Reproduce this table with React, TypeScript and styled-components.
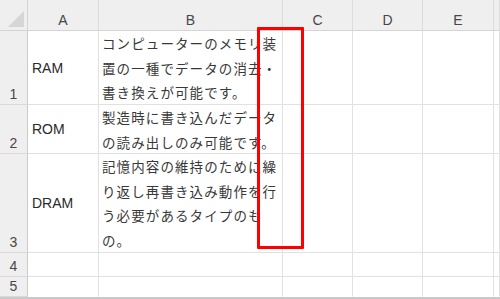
import React from 'react';
import styled, { createGlobalStyle } from 'styled-components';

interface IRow {
  num: number;
  height: number;
  label?: string;
  lines?: string[];
}

const columns = ['A', 'B', 'C', 'D', 'E', ''];

const rows: IRow[] = [
  {
    num: 1,
    height: 74,
    label: 'RAM',
    lines: ['コンピューターのメモリ装', '置の一種でデータの消去・', '書き換えが可能です。'],
  },
  {
    num: 2,
    height: 49,
    label: 'ROM',
    lines: ['製造時に書き込んだデータ', 'の読み出しのみ可能です。'],
  },
  {
    num: 3,
    height: 99,
    label: 'DRAM',
    lines: ['記憶内容の維持のために繰', 'り返し再書き込み動作を行', 'う必要があるタイプのも', 'の。'],
  },
  { num: 4, height: 24 },
  { num: 5, height: 20 },
];

const GlobalStyle = createGlobalStyle`
  html, body {
    margin: 0;
    padding: 0;
    background: #ffffff;
  }
  body {
    font-family: "Liberation Sans", Arial, sans-serif;
    overflow: hidden;
  }
`;

const Wrapper = styled.div`
  position: relative;
  width: 500px;
  height: 299px;
  overflow: hidden;
  border-bottom: 2px solid #c9c9c9;
  box-sizing: border-box;
`;

const Sheet = styled.div<{ $rows: string }>`
  display: grid;
  grid-template-columns: 28px 71px 184px 70px 70px 71px 1fr;
  grid-template-rows: ${(p) => p.$rows};
`;

const Corner = styled.div`
  background: #efefef;
  border-right: 1px solid #d4d4d4;
  border-bottom: 1px solid #d4d4d4;
  box-sizing: border-box;
  display: flex;
  align-items: flex-end;
  justify-content: flex-end;
  padding: 0 2px 2px 0;

  svg {
    display: block;
  }
`;

const ColHead = styled.div`
  background: #efefef;
  border-right: 1px solid #dcdcdc;
  border-bottom: 1px solid #d4d4d4;
  box-sizing: border-box;
  display: flex;
  align-items: center;
  justify-content: center;
  padding-top: 9px;
  font-size: 14px;
  color: #474747;
`;

const RowHead = styled.div`
  background: #efefef;
  border-right: 1px solid #cacaca;
  border-bottom: 1px solid #dadada;
  box-sizing: border-box;
  display: flex;
  align-items: flex-end;
  justify-content: center;
  line-height: 20px;
  font-size: 14px;
  color: #474747;
`;

const Cell = styled.div<{ $last?: boolean }>`
  border-right: 1px solid #e1e1e1;
  border-bottom: 1px solid ${(p) => (p.$last ? '#ffffff' : '#e1e1e1')};
  box-sizing: border-box;
  min-width: 0;
`;

const LabelCell = styled(Cell)`
  display: flex;
  align-items: center;
  padding-left: 4px;
  font-size: 14px;
  color: #2a2a2a;
`;

const TextCell = styled(Cell)`
  padding-left: 3px;
  font-family: "Noto Sans CJK JP", "Noto Sans", sans-serif;
  font-size: 13.5px;
  letter-spacing: 1.1px;
  line-height: 24.5px;
  color: #383838;
  white-space: nowrap;
  overflow: visible;

  span {
    display: block;
  }
`;

const Highlight = styled.div`
  position: absolute;
  left: 257px;
  top: 27px;
  width: 47px;
  height: 222px;
  border: 3px solid #ff0000;
  border-radius: 1px;
  box-sizing: border-box;
  pointer-events: none;
`;

export default function App() {
  const rowTemplate = ['31px', ...rows.map((r) => `${r.height}px`)].join(' ');

  return (
    <>
      <GlobalStyle />
      <Wrapper>
        <Sheet $rows={rowTemplate}>
          <Corner>
            <svg width="17" height="17" viewBox="0 0 17 17">
              <polygon points="0,16 16,16 16,0" fill="#d6d6d6" />
            </svg>
          </Corner>
          {columns.map((col, i) => (
            <ColHead key={`h${i}`}>{col}</ColHead>
          ))}

          {rows.map((row) => {
            const last = row.num === rows.length;
            return (
              <React.Fragment key={row.num}>
                <RowHead>{row.num}</RowHead>
                <LabelCell $last={last}>{row.label}</LabelCell>
                <TextCell $last={last}>
                  {row.lines?.map((line) => (
                    <span key={line}>{line}</span>
                  ))}
                </TextCell>
                <Cell $last={last} />
                <Cell $last={last} />
                <Cell $last={last} />
                <Cell $last={last} />
              </React.Fragment>
            );
          })}
        </Sheet>
        <Highlight />
      </Wrapper>
    </>
  );
}
